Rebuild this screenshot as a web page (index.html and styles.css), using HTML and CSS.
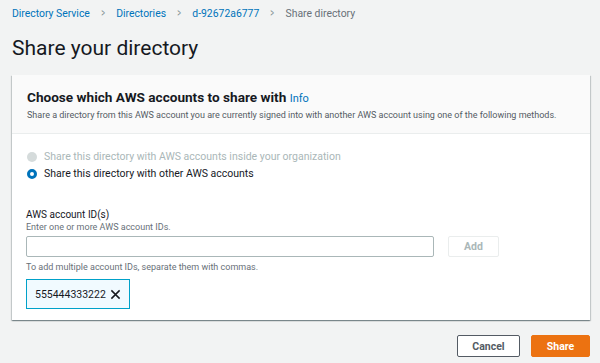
FILE: index.html
```html
<!doctype html>
<html lang="en">
<head>
	<meta charset="UTF-8">
	<title>Share directory</title>
	<link rel="stylesheet" href="styles.css">
</head>
<body>
	<div class="page">
		<nav class="crumbs">
			<a href="#">Directory Service</a>
			<span class="sep">&gt;</span>
			<a href="#">Directories</a>
			<span class="sep">&gt;</span>
			<a href="#">d-92672a6777</a>
			<span class="sep">&gt;</span>
			<span class="current">Share directory</span>
		</nav>
		<h1 class="title">Share your directory</h1>

		<div class="card">
			<div class="card-head">
				<h2>Choose which AWS accounts to share with <a href="#" class="info">Info</a></h2>
				<p>Share a directory from this AWS account you are currently signed into with another AWS account using one of the following methods.</p>
			</div>
			<div class="card-body">
				<div class="radios">
					<label class="radio disabled"><span class="dot"></span>Share this directory with AWS accounts inside your organization</label>
					<label class="radio checked"><span class="dot"></span>Share this directory with other AWS accounts</label>
				</div>

				<div class="field">
					<div class="label">AWS account ID(s)</div>
					<div class="desc">Enter one or more AWS account IDs.</div>
					<div class="input-row">
						<input type="text" class="input">
						<button class="btn-add">Add</button>
					</div>
					<div class="hint">To add multiple account IDs, separate them with commas.</div>
					<div class="token">555444333222
						<svg width="11" height="11" viewBox="0 0 12 12"><path d="M1.5 1.5L10.5 10.5M10.5 1.5L1.5 10.5" stroke="#16191f" stroke-width="1.6" fill="none"/></svg>
					</div>
				</div>
			</div>
		</div>

		<div class="actions">
			<button class="btn-cancel">Cancel</button>
			<button class="btn-share">Share</button>
		</div>
	</div>
</body>
</html>
```

FILE: styles.css
```css
body {
	margin: 0;
	padding: 0;
	background: #f2f3f3;
	font-family: Roboto, "Noto Sans", sans-serif;
	color: #16191f;
}
.page {
	padding: 5px 10px 0 12px;
}
.crumbs {
	display: flex;
	align-items: center;
	gap: 10px;
	font-size: 10.4px;
	height: 16px;
}
.crumbs a {
	color: #0073bb;
	text-decoration: none;
}
.crumbs .sep {
	color: #879596;
	font-size: 12px;
	transform: scaleX(0.6);
}
.crumbs .current {
	color: #687078;
}
.title {
	font-size: 21px;
	font-weight: 400;
	margin: 12px 0 0 0;
	height: 30px;
	line-height: 30px;
}
.card {
	margin-top: 12px;
	background: #fff;
	box-shadow: 0 1px 1px 0 rgba(0,28,36,.3), 1px 1px 1px 0 rgba(0,28,36,.15), -1px 1px 1px 0 rgba(0,28,36,.15);
}
.card-head {
	background: #fafafa;
	border-bottom: 1px solid #eaeded;
	padding: 13px 15px 12px 15px;
	height: 33px;
}
.card-head h2 {
	margin: 0;
	font-size: 13.6px;
	font-weight: 700;
	line-height: 18px;
}
.card-head .info {
	color: #0073bb;
	font-size: 11px;
	font-weight: 400;
	text-decoration: none;
}
.card-head p {
	margin: 1px 0 0 0;
	font-size: 9px;
	line-height: 12px;
	color: #545b64;
}
.card-body {
	padding: 16px 13px 11px 14px;
}
.radios {
	display: flex;
	flex-direction: column;
	gap: 4px;
}
.radio {
	display: flex;
	align-items: center;
	gap: 7px;
	font-size: 10.5px;
	line-height: 13px;
	padding-left: 1px;
}
.radio .dot {
	width: 10px;
	height: 10px;
	box-sizing: border-box;
	border-radius: 50%;
}
.radio.disabled {
	color: #aab7b8;
}
.radio.disabled .dot {
	background: #d5dbdb;
}
.radio.checked .dot {
	border: 3px solid #0073bb;
	background: #fff;
}
.field {
	margin-top: 28px;
}
.label {
	font-size: 10px;
	line-height: 13px;
}
.desc, .hint {
	font-size: 9px;
	line-height: 12px;
	color: #687078;
}
.input-row {
	display: flex;
	align-items: center;
	gap: 14px;
	margin-top: 3px;
}
.input {
	width: 408px;
	height: 21px;
	box-sizing: border-box;
	border: 1px solid #aab7b8;
	border-radius: 2px;
	margin: 0;
}
.btn-add {
	width: 51px;
	height: 21px;
	margin: 0;
	background: #fff;
	border: 1px solid #eaeded;
	border-radius: 2px;
	color: #aab7b8;
	font-family: inherit;
	font-size: 10.5px;
	font-weight: 700;
}
.hint {
	margin-top: 4px;
}
.token {
	display: inline-flex;
	align-items: center;
	gap: 4px;
	margin-top: 6px;
	height: 30px;
	box-sizing: border-box;
	padding: 0 8px 0 8px;
	background: #f1faff;
	border: 1px solid #00a1c9;
	font-size: 10.5px;
}
.actions {
	display: flex;
	justify-content: flex-end;
	gap: 11px;
	margin-top: 15px;
}
.actions button {
	height: 22px;
	margin: 0;
	border-radius: 2px;
	font-family: inherit;
	font-size: 10.5px;
	font-weight: 700;
}
.btn-cancel {
	width: 63px;
	background: #fff;
	border: 1px solid #545b64;
	color: #545b64;
}
.btn-share {
	width: 59px;
	background: #ec7211;
	border: 1px solid #ec7211;
	color: #fff;
}
```
